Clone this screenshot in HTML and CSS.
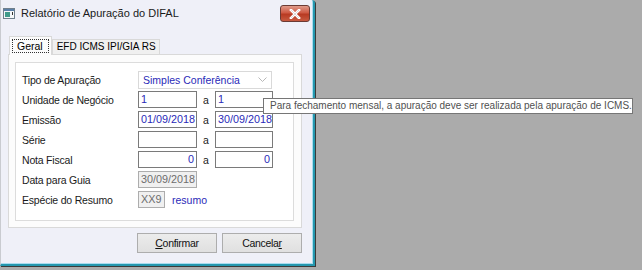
FILE: index.html
```html
<!DOCTYPE html>
<html lang="pt-BR">
<head>
    <meta charset="UTF-8">
    <title>Relatório de Apuração do DIFAL</title>
    <link rel="stylesheet" href="styles.css">
</head>
<body>
    <div class="window">
        <div class="titlebar">
            <div class="title">
                <svg class="app-icon" width="12" height="11" viewBox="0 0 12 11">
                    <rect x="0.5" y="0.5" width="11" height="10" fill="#f4f6f8" stroke="#6f7f8c"/>
                    <rect x="1" y="1" width="10" height="2" fill="#5a7fa8"/>
                    <rect x="2" y="4" width="5" height="5" fill="#3f9a8a"/>
                    <rect x="9" y="4" width="1" height="3" fill="#333"/>
                </svg>
                <span>Relatório de Apuração do DIFAL</span>
            </div>
            <div class="close">
                <svg width="12" height="10" viewBox="0 0 12 10">
                    <path d="M2 1 L10 9 M10 1 L2 9" stroke="#fff" stroke-width="2.6" stroke-linecap="square"/>
                    <path d="M2 1 L10 9 M10 1 L2 9" stroke="#8a8a8a" stroke-width="0.6" fill="none" opacity="0.5"/>
                </svg>
            </div>
        </div>

        <div class="client">
            <div class="tabs">
                <div class="tab active"><span class="focus">Geral</span></div>
                <div class="tab">EFD ICMS IPI/GIA RS</div>
            </div>
            <div class="tab-page">
                <div class="group">
                    <div class="row">
                        <label>Tipo de Apuração</label>
                        <div class="combo">
                            <span>Simples Conferência</span>
                            <svg width="9" height="6" viewBox="0 0 9 6"><path d="M0.5 0.5 L4.5 4.5 L8.5 0.5" stroke="#b8b8b8" fill="none"/></svg>
                        </div>
                    </div>
                    <div class="row">
                        <label>Unidade de Negócio</label>
                        <div class="field">1</div>
                        <span class="sep">a</span>
                        <div class="field wide">1</div>
                    </div>
                    <div class="row">
                        <label>Emissão</label>
                        <div class="field">01/09/2018</div>
                        <span class="sep">a</span>
                        <div class="field wide">30/09/2018</div>
                    </div>
                    <div class="row">
                        <label>Série</label>
                        <div class="field"></div>
                        <span class="sep">a</span>
                        <div class="field wide"></div>
                    </div>
                    <div class="row">
                        <label>Nota Fiscal</label>
                        <div class="field num">0</div>
                        <span class="sep">a</span>
                        <div class="field wide num">0</div>
                    </div>
                    <div class="row">
                        <label>Data para Guia</label>
                        <div class="field disabled">30/09/2018</div>
                    </div>
                    <div class="row">
                        <label>Espécie do Resumo</label>
                        <div class="field disabled small">XX9</div>
                        <span class="link">resumo</span>
                    </div>
                </div>
            </div>
            <div class="buttons">
                <button><u>C</u>onfirmar</button>
                <button>Cancela<u>r</u></button>
            </div>
        </div>
    </div>

    <div class="tooltip">Para fechamento mensal, a apuração deve ser realizada pela apuração de ICMS.</div>
</body>
</html>
```

FILE: styles.css
```css
* {
    margin: 0;
    padding: 0;
    box-sizing: border-box;
}
body {
    width: 642px;
    height: 270px;
    background: #ababab;
    overflow: hidden;
    position: relative;
    font-family: "Liberation Sans", Arial, sans-serif;
    font-size: 10px;
    color: #000;
}
.window {
    width: 315px;
    height: 266px;
    background: #eff0f8;
    border-left: 1px solid #c9cbd0;
    border-right: 2px solid #2497ae;
    border-bottom: 2px solid #2497ae;
    border-top-right-radius: 3px;
    box-shadow: inset -1px -1px 0 #a9dcef, 1px 1px 0 #3a3a3a;
    display: flex;
    flex-direction: column;
}
.titlebar {
    height: 27px;
    display: flex;
    justify-content: space-between;
    align-items: flex-start;
    padding: 5px 3px 0 2px;
}
.title {
    display: flex;
    align-items: center;
    gap: 6px;
    font-size: 11px;
    color: #1a1a1a;
    padding-top: 2px;
}
.app-icon {
    display: block;
}
.close {
    width: 30px;
    height: 17px;
    border: 1px solid #6b3b34;
    border-radius: 3px;
    background: linear-gradient(#e09a8a, #cf5a44 45%, #b83a22 55%, #c75a40);
    display: flex;
    justify-content: center;
    align-items: center;
}
.client {
    flex: 1;
    padding: 9px 11px 0 7px;
}
.tabs {
    display: flex;
    align-items: flex-end;
    height: 18px;
    padding-left: 1px;
    position: relative;
    z-index: 1;
}
.tab {
    height: 15px;
    padding: 0 3px 0 4px;
    border: 1px solid #d9d9d9;
    border-bottom: none;
    background: #f0f0f0;
    line-height: 14px;
    font-size: 10px;
}
.tab.active {
    height: 19px;
    margin-bottom: -1px;
    background: #fcfcfc;
    padding: 2px 2px 0 2px;
}
.tab .focus {
    display: block;
    border: 1px dotted #333;
    padding: 0 5px 0 4px;
    line-height: 12px;
    font-size: 10.5px;
}
.tab-page {
    height: 174px;
    border: 1px solid #d9d9d9;
    background: #fcfcfc;
    padding: 7px 7px 6px 6px;
}
.group {
    height: 159px;
    border: 1px solid #dcdcdc;
    background: #fff;
    padding: 8px 6px 0 6px;
    display: flex;
    flex-direction: column;
    gap: 3px;
}
.row {
    display: flex;
    align-items: center;
    height: 17px;
}
.row label {
    width: 116px;
    color: #1a1a1a;
    font-size: 10.5px;
    letter-spacing: -0.2px;
}
.combo {
    width: 134px;
    height: 18px;
    border: 1px solid #d9d9d9;
    display: flex;
    justify-content: space-between;
    align-items: center;
    padding: 0 4px 0 4px;
    color: #2a2ab8;
    font-size: 10.5px;
}
.field {
    width: 59px;
    height: 17px;
    border: 1px solid #7a7a7a;
    background: #fff;
    color: #2a2ab8;
    padding: 0 2px;
    font-size: 10.8px;
    line-height: 15px;
    white-space: nowrap;
    overflow: hidden;
}
.field.wide {
    width: 58px;
}
.field.num {
    text-align: right;
}
.field.disabled {
    border-color: #adadad;
    background: #f0f0f0;
    color: #6d6d6d;
}
.field.small {
    width: 27px;
}
.sep {
    width: 18px;
    text-align: center;
    color: #1a1a1a;
    font-size: 10.5px;
}
.link {
    color: #2a2ab8;
    margin-left: 7px;
    font-size: 10.5px;
}
.buttons {
    display: flex;
    justify-content: flex-end;
    gap: 5px;
    margin-top: 5px;
}
.buttons button {
    width: 80px;
    height: 20px;
    border: 1px solid #adadad;
    background: linear-gradient(#ececec, #e0e0e0);
    font-family: "Liberation Sans", Arial, sans-serif;
    font-size: 10.5px;
    letter-spacing: -0.3px;
    color: #111;
}
.tooltip {
    position: absolute;
    left: 263px;
    top: 98px;
    width: 370px;
    height: 16px;
    border: 1px solid #767676;
    background: #fff;
    color: #505050;
    padding-left: 6px;
    font-size: 10px;
    line-height: 14px;
    white-space: nowrap;
}
```
